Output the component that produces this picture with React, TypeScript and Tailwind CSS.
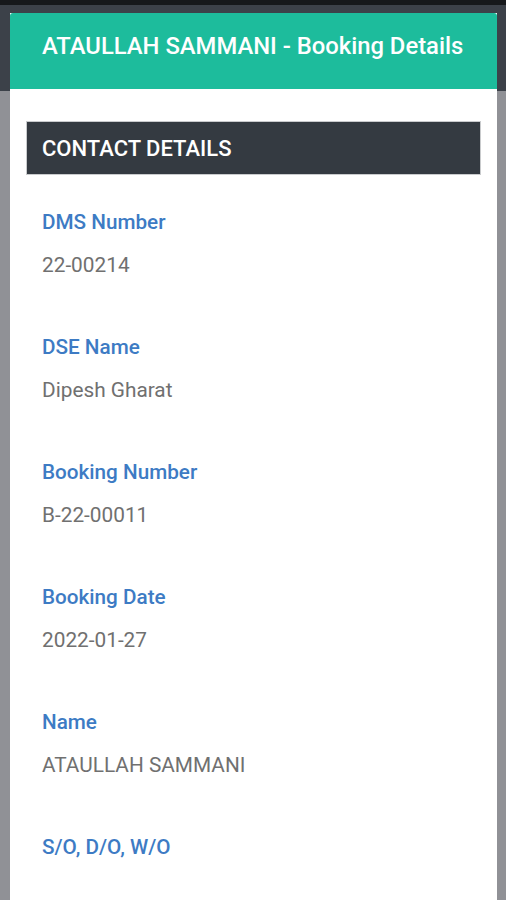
const fields = [
  { label: 'DMS Number', value: '22-00214' },
  { label: 'DSE Name', value: 'Dipesh Gharat' },
  { label: 'Booking Number', value: 'B-22-00011' },
  { label: 'Booking Date', value: '2022-01-27' },
  { label: 'Name', value: 'ATAULLAH SAMMANI' },
  { label: 'S/O, D/O, W/O', value: '' },
];

export default function App() {
  return (
    <div className="relative h-[900px] overflow-hidden bg-[#909196]" style={{ fontFamily: 'Roboto, "Noto Sans", sans-serif' }}>
      <div className="h-[5px] bg-[#16181b]" />
      <div className="h-[86px] bg-[#3c4149]" />

      <div className="absolute left-[10px] right-[9px] top-[13px] bottom-0 bg-white">
        <div className="h-[76px] rounded-t-[3px] bg-[#1dbc9c] px-[32px] pt-[19px]">
          <h1 className="text-[23.8px] font-medium leading-[28px] text-white">ATAULLAH SAMMANI - Booking Details</h1>
        </div>

        <div className="px-[16px] pt-[32px]">
          <div className="flex h-[54px] items-center border border-[#c9cbcd] bg-[#343a41] px-[15px]">
            <span className="text-[22px] font-medium text-white">CONTACT DETAILS</span>
          </div>

          <div className="px-[16px] pt-[35px]">
            {fields.map((f) => (
              <div key={f.label} className="h-[125px]">
                <div className="text-[20.7px] font-medium leading-[24px] text-[#3d7bc4]">{f.label}</div>
                <div className="mt-[19px] text-[20.8px] leading-[24px] text-[#707070]">{f.value}</div>
              </div>
            ))}
          </div>
        </div>
      </div>
    </div>
  );
}
